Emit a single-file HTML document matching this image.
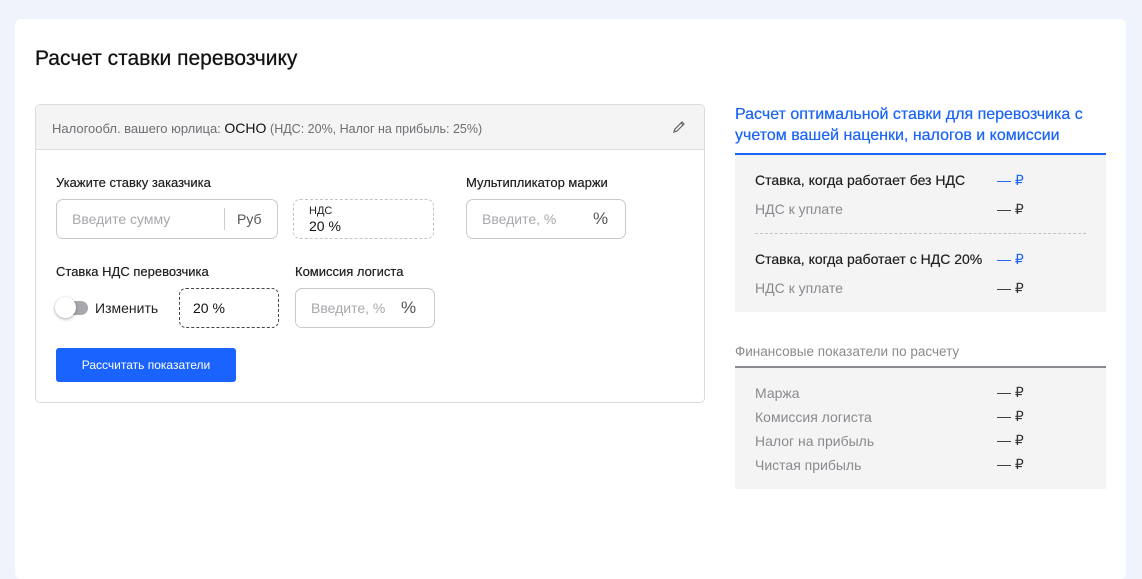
<!DOCTYPE html>
<html><head><meta charset="utf-8"><style>
*{box-sizing:border-box;margin:0;padding:0}
body{width:1142px;height:565px;background:#eff3fb;font-family:"Liberation Sans",sans-serif;position:relative;overflow:hidden;color:#1a1a1a}
.a{position:absolute}
.card{left:15px;top:19px;width:1111px;height:560px;background:#fff;border-radius:6px}
.inp{border:1px solid #c9c9cc;border-radius:7px;height:40px;font-size:14px;color:#a8a8ad}
.lbl{font-size:13px;color:#222;text-shadow:0 0 .4px #222}
.dash{border:1px dashed #c4c4c8;border-radius:7px}
.r{font-size:14px}
</style></head><body>
<div class="a card"></div>
<div class="a" style="left:35px;top:47px;font-size:21px;color:#111;text-shadow:0 0 .6px #111">Расчет ставки перевозчику</div>

<div class="a" style="left:35px;top:104px;width:670px;height:299px;border:1px solid #dcdcdf;border-radius:5px;overflow:hidden">
  <div style="height:45px;background:#f4f4f5;border-bottom:1px solid #dcdcdf;position:relative">
    <div class="a" style="left:16px;top:15px;font-size:13px;color:#6e6e73">Налогообл. вашего юрлица: <span style="color:#111;font-size:14px">ОСНО</span> <span style="font-size:12.5px">(НДС: 20%, Налог на прибыль: 25%)</span></div>
    <svg class="a" style="left:636px;top:15px" width="14" height="14" viewBox="0 0 14 14"><path d="M2 12l1-3 7-7 2 2-7 7z M9 3l2 2" fill="none" stroke="#666" stroke-width="1.2"/></svg>
  </div>
</div>
<div class="a lbl" style="left:56px;top:175px">Укажите ставку заказчика</div>
<div class="a inp" style="left:56px;top:199px;width:222px"><span class="a" style="left:15px;top:11px">Введите сумму</span><span class="a" style="left:167px;top:8px;height:22px;border-left:1px solid #ccc"></span><span class="a" style="left:180px;top:11px;color:#555">Руб</span></div>
<div class="a dash" style="left:293px;top:199px;width:141px;height:40px"><span class="a" style="left:15px;top:5px;font-size:11px;color:#222">НДС</span><span class="a" style="left:15px;top:18px;font-size:14px;color:#111">20 %</span></div>
<div class="a lbl" style="left:466px;top:175px">Мультипликатор маржи</div>
<div class="a inp" style="left:466px;top:199px;width:160px"><span class="a" style="left:15px;top:11px">Введите, %</span><span class="a" style="left:126px;top:9px;color:#555;font-size:17px">%</span></div>
<div class="a lbl" style="left:56px;top:264px">Ставка НДС перевозчика</div>
<div class="a" style="left:58px;top:301px;width:30px;height:14px;border-radius:7px;background:#a8a8ad"></div>
<div class="a" style="left:55px;top:297px;width:21px;height:21px;border-radius:50%;background:#fff;box-shadow:0 1px 3px rgba(0,0,0,.35)"></div>
<div class="a" style="left:95px;top:300px;font-size:14px;color:#222">Изменить</div>
<div class="a" style="left:179px;top:288px;width:100px;height:40px;border:1px dashed #444;border-radius:7px"><span class="a" style="left:13px;top:11px;font-size:14px;color:#111">20 %</span></div>
<div class="a lbl" style="left:295px;top:264px">Комиссия логиста</div>
<div class="a inp" style="left:295px;top:288px;width:140px"><span class="a" style="left:15px;top:11px">Введите, %</span><span class="a" style="left:105px;top:9px;color:#555;font-size:17px">%</span></div>
<div class="a" style="left:56px;top:348px;width:180px;height:34px;background:#1a63ff;border-radius:3px;color:#fff;font-size:12px;text-align:center;line-height:34px">Рассчитать показатели</div>

<div class="a" style="left:735px;top:104px;font-size:16px;color:#1a63f5;line-height:21px;width:380px;text-shadow:0 0 .5px #1a63f5">Расчет оптимальной ставки для перевозчика с учетом вашей наценки, налогов и комиссии</div>
<div class="a" style="left:735px;top:153px;width:371px;height:2px;background:#1a63f5"></div>
<div class="a" style="left:735px;top:155px;width:371px;height:157px;background:#f4f4f5"></div>
<div class="a r" style="left:755px;top:172px;color:#222;text-shadow:0 0 .4px #222">Ставка, когда работает без НДС</div>
<div class="a r" style="left:997px;top:172px;color:#1a63f5">— ₽</div>
<div class="a r" style="left:755px;top:201px;color:#8a8a8f">НДС к уплате</div>
<div class="a r" style="left:997px;top:201px;color:#333">— ₽</div>
<div class="a" style="left:755px;top:233px;width:331px;border-top:1px dashed #c4c4c8"></div>
<div class="a r" style="left:755px;top:251px;color:#222;text-shadow:0 0 .4px #222">Ставка, когда работает с НДС 20%</div>
<div class="a r" style="left:997px;top:251px;color:#1a63f5">— ₽</div>
<div class="a r" style="left:755px;top:280px;color:#8a8a8f">НДС к уплате</div>
<div class="a r" style="left:997px;top:280px;color:#333">— ₽</div>

<div class="a" style="left:735px;top:344px;font-size:13.5px;color:#8a8a8f">Финансовые показатели по расчету</div>
<div class="a" style="left:735px;top:366px;width:371px;height:2px;background:#8a8a90"></div>
<div class="a" style="left:735px;top:368px;width:371px;height:121px;background:#f4f4f5"></div>
<div class="a r" style="left:755px;top:385px;color:#8a8a8f">Маржа</div><div class="a r" style="left:997px;top:384px;color:#333">— ₽</div>
<div class="a r" style="left:755px;top:409px;color:#8a8a8f">Комиссия логиста</div><div class="a r" style="left:997px;top:408px;color:#333">— ₽</div>
<div class="a r" style="left:755px;top:433px;color:#8a8a8f">Налог на прибыль</div><div class="a r" style="left:997px;top:432px;color:#333">— ₽</div>
<div class="a r" style="left:755px;top:457px;color:#8a8a8f">Чистая прибыль</div><div class="a r" style="left:997px;top:456px;color:#333">— ₽</div>
</body></html>
